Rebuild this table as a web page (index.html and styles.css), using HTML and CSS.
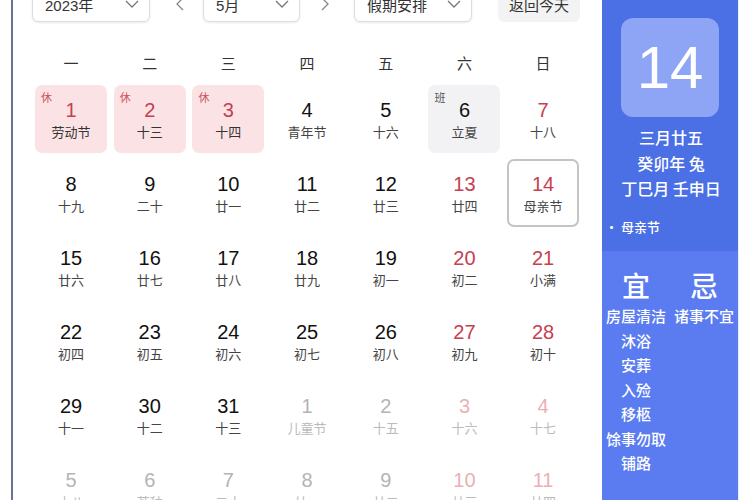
FILE: index.html
```html
<!DOCTYPE html>
<html lang="zh">
<head>
<meta charset="utf-8">
<link rel="stylesheet" href="styles.css">
</head>
<body>
<div class="page">
  <div class="gutter"></div>
  <div class="main">
    <div class="topbar">
      <div class="select w-year"><span>2023年</span><svg class="chev" viewBox="0 0 14 8"><path d="M1 1l6 6 6-6"/></svg></div>
      <svg class="arrow arrow-prev" viewBox="0 0 8 14"><path d="M7 1L1 7l6 6"/></svg>
      <div class="select w-month"><span>5月</span><svg class="chev" viewBox="0 0 14 8"><path d="M1 1l6 6 6-6"/></svg></div>
      <svg class="arrow arrow-next" viewBox="0 0 8 14"><path d="M1 1l6 6-6 6"/></svg>
      <div class="select w-hol"><span>假期安排</span><svg class="chev" viewBox="0 0 14 8"><path d="M1 1l6 6 6-6"/></svg></div>
      <div class="today-btn">返回今天</div>
    </div>
    <div class="weekdays">
      <div>一</div><div>二</div><div>三</div><div>四</div><div>五</div><div>六</div><div>日</div>
    </div>
    <div class="grid">
      <div class="cell rest"><span class="tag">休</span><div class="num red">1</div><div class="lun">劳动节</div></div>
      <div class="cell rest"><span class="tag">休</span><div class="num red">2</div><div class="lun">十三</div></div>
      <div class="cell rest"><span class="tag">休</span><div class="num red">3</div><div class="lun">十四</div></div>
      <div class="cell"><div class="num">4</div><div class="lun">青年节</div></div>
      <div class="cell"><div class="num">5</div><div class="lun">十六</div></div>
      <div class="cell work"><span class="tag dark">班</span><div class="num">6</div><div class="lun">立夏</div></div>
      <div class="cell"><div class="num red">7</div><div class="lun">十八</div></div>

      <div class="cell"><div class="num">8</div><div class="lun">十九</div></div>
      <div class="cell"><div class="num">9</div><div class="lun">二十</div></div>
      <div class="cell"><div class="num">10</div><div class="lun">廿一</div></div>
      <div class="cell"><div class="num">11</div><div class="lun">廿二</div></div>
      <div class="cell"><div class="num">12</div><div class="lun">廿三</div></div>
      <div class="cell"><div class="num red">13</div><div class="lun">廿四</div></div>
      <div class="cell selected"><div class="num red">14</div><div class="lun">母亲节</div></div>

      <div class="cell"><div class="num">15</div><div class="lun">廿六</div></div>
      <div class="cell"><div class="num">16</div><div class="lun">廿七</div></div>
      <div class="cell"><div class="num">17</div><div class="lun">廿八</div></div>
      <div class="cell"><div class="num">18</div><div class="lun">廿九</div></div>
      <div class="cell"><div class="num">19</div><div class="lun">初一</div></div>
      <div class="cell"><div class="num red">20</div><div class="lun">初二</div></div>
      <div class="cell"><div class="num red">21</div><div class="lun">小满</div></div>

      <div class="cell"><div class="num">22</div><div class="lun">初四</div></div>
      <div class="cell"><div class="num">23</div><div class="lun">初五</div></div>
      <div class="cell"><div class="num">24</div><div class="lun">初六</div></div>
      <div class="cell"><div class="num">25</div><div class="lun">初七</div></div>
      <div class="cell"><div class="num">26</div><div class="lun">初八</div></div>
      <div class="cell"><div class="num red">27</div><div class="lun">初九</div></div>
      <div class="cell"><div class="num red">28</div><div class="lun">初十</div></div>

      <div class="cell"><div class="num">29</div><div class="lun">十一</div></div>
      <div class="cell"><div class="num">30</div><div class="lun">十二</div></div>
      <div class="cell"><div class="num">31</div><div class="lun">十三</div></div>
      <div class="cell other"><div class="num">1</div><div class="lun">儿童节</div></div>
      <div class="cell other"><div class="num">2</div><div class="lun">十五</div></div>
      <div class="cell other"><div class="num red">3</div><div class="lun">十六</div></div>
      <div class="cell other"><div class="num red">4</div><div class="lun">十七</div></div>

      <div class="cell other"><div class="num">5</div><div class="lun">十八</div></div>
      <div class="cell other"><div class="num">6</div><div class="lun">芒种</div></div>
      <div class="cell other"><div class="num">7</div><div class="lun">二十</div></div>
      <div class="cell other"><div class="num">8</div><div class="lun">廿一</div></div>
      <div class="cell other"><div class="num">9</div><div class="lun">廿二</div></div>
      <div class="cell other"><div class="num red">10</div><div class="lun">廿三</div></div>
      <div class="cell other"><div class="num red">11</div><div class="lun">廿四</div></div>
    </div>
  </div>
  <div class="side">
    <div class="side-top">
      <div class="bigdate">14</div>
      <div class="lunar-lines">
        <div>三月廿五</div>
        <div>癸卯年 兔</div>
        <div>丁巳月 壬申日</div>
      </div>
      <div class="fest">• 母亲节</div>
    </div>
    <div class="side-bottom">
      <div class="yj-col">
        <div class="yj-head">宜</div>
        <div class="yj-item">房屋清洁</div>
        <div class="yj-item">沐浴</div>
        <div class="yj-item">安葬</div>
        <div class="yj-item">入殓</div>
        <div class="yj-item">移柩</div>
        <div class="yj-item">馀事勿取</div>
        <div class="yj-item">铺路</div>
      </div>
      <div class="yj-col">
        <div class="yj-head">忌</div>
        <div class="yj-item">诸事不宜</div>
      </div>
    </div>
  </div>
  <div class="edge"></div>
</div>
</body>
</html>
```

FILE: styles.css
```css
* { box-sizing: border-box; }
html, body { margin: 0; padding: 0; }
body {
  width: 750px;
  height: 500px;
  overflow: hidden;
  background: #fff;
  font-family: "Liberation Sans", "Noto Sans CJK SC", sans-serif;
  color: #111;
}
.page {
  display: flex;
  height: 500px;
}
.gutter {
  width: 13px;
  flex: none;
  border-right: 2px solid #6c7290;
}
.main {
  width: 589px;
  flex: none;
  padding-left: 22px;
  background: #fff;
}
.topbar {
  display: flex;
  align-items: center;
  height: 36px;
  margin-top: -14px;
  margin-left: -3px;
}
.select {
  height: 36px;
  border: 1px solid #dcdcdc;
  border-radius: 6px;
  box-shadow: 0 1px 3px rgba(0,0,0,0.08);
  display: flex;
  align-items: center;
  justify-content: space-between;
  padding: 0 10px 0 12px;
  font-size: 15px;
  color: #333;
  background: #fff;
}
.w-year { width: 118px; }
.w-month { width: 97px; }
.w-hol { width: 118px; }
.chev {
  width: 14px;
  height: 8px;
  fill: none;
  stroke: #777;
  stroke-width: 1.3;
}
.arrow {
  width: 8px;
  height: 14px;
  fill: none;
  stroke: #888;
  stroke-width: 1.3;
}
.arrow-prev { margin: 0 19px 0 26px; }
.arrow-next { margin: 0 25px 0 21px; }
.today-btn {
  margin-left: 26px;
  height: 36px;
  width: 82px;
  border-radius: 6px;
  background: #f3f3f4;
  display: flex;
  align-items: center;
  justify-content: center;
  font-size: 15px;
  color: #333;
}
.weekdays {
  display: grid;
  grid-template-columns: repeat(7, 72px);
  column-gap: 6.7px;
  margin-top: 28px;
  height: 24px;
  align-items: center;
  font-family: "Noto Sans CJK SC", sans-serif;
  font-size: 15px;
  color: #333;
  text-align: center;
}
.grid {
  margin-top: 11px;
  display: grid;
  grid-template-columns: repeat(7, 72px);
  grid-auto-rows: 68px;
  column-gap: 6.7px;
  row-gap: 6px;
}
.cell {
  position: relative;
  border-radius: 7px;
  display: flex;
  flex-direction: column;
  align-items: center;
  padding-top: 14px;
}
.num {
  font-size: 20px;
  line-height: 22px;
  color: #111;
}
.num.red { color: #c6404f; }
.lun {
  margin-top: 2px;
  font-family: "Noto Sans CJK SC", sans-serif;
  font-size: 13px;
  line-height: 18px;
  color: #444;
}
.rest { background: #fbe3e5; }
.rest .lun { color: #333; }
.work { background: #f2f2f4; }
.tag {
  position: absolute;
  top: 5px;
  left: 6px;
  font-family: "Noto Sans CJK SC", sans-serif;
  font-size: 11px;
  line-height: 14px;
  color: #d0505e;
}
.tag.dark { color: #555; }
.selected {
  border: 2px solid #c4c4c8;
  padding-top: 12px;
}
.other .num { color: #b4b4b4; }
.other .num.red { color: #eab0b6; }
.other .lun { color: #bbb; }
.side {
  width: 136px;
  flex: none;
  color: #fff;
  font-family: "Noto Sans CJK SC", sans-serif;
  font-weight: 500;
  display: flex;
  flex-direction: column;
}
.side-top {
  background: #4b6fe4;
  height: 251px;
  padding-top: 18px;
}
.bigdate {
  margin-left: 19px;
  width: 98px;
  height: 99px;
  border-radius: 12px;
  background: #8ea5f5;
  display: flex;
  align-items: center;
  justify-content: center;
  font-family: "Liberation Sans", sans-serif;
  font-weight: 400;
  font-size: 60px;
  color: #fff;
}
.lunar-lines {
  margin-top: 8px;
  text-align: center;
  font-size: 16px;
  line-height: 25.5px;
  padding-left: 2px;
}
.fest {
  margin-top: 15px;
  padding-left: 3px;
  font-size: 13px;
  line-height: 20px;
}
.side-bottom {
  flex: 1;
  background: #5a7cf0;
  display: flex;
  padding-top: 17px;
}
.yj-col {
  width: 68px;
  display: flex;
  flex-direction: column;
  align-items: center;
}
.yj-head {
  font-size: 28px;
  line-height: 34px;
  height: 34px;
  margin-bottom: 2px;
}
.yj-item {
  font-size: 15px;
  line-height: 24.5px;
  white-space: nowrap;
}
.edge {
  flex: 1;
  border-left: 1px solid #e8eef8;
  background: #fff;
}
```
